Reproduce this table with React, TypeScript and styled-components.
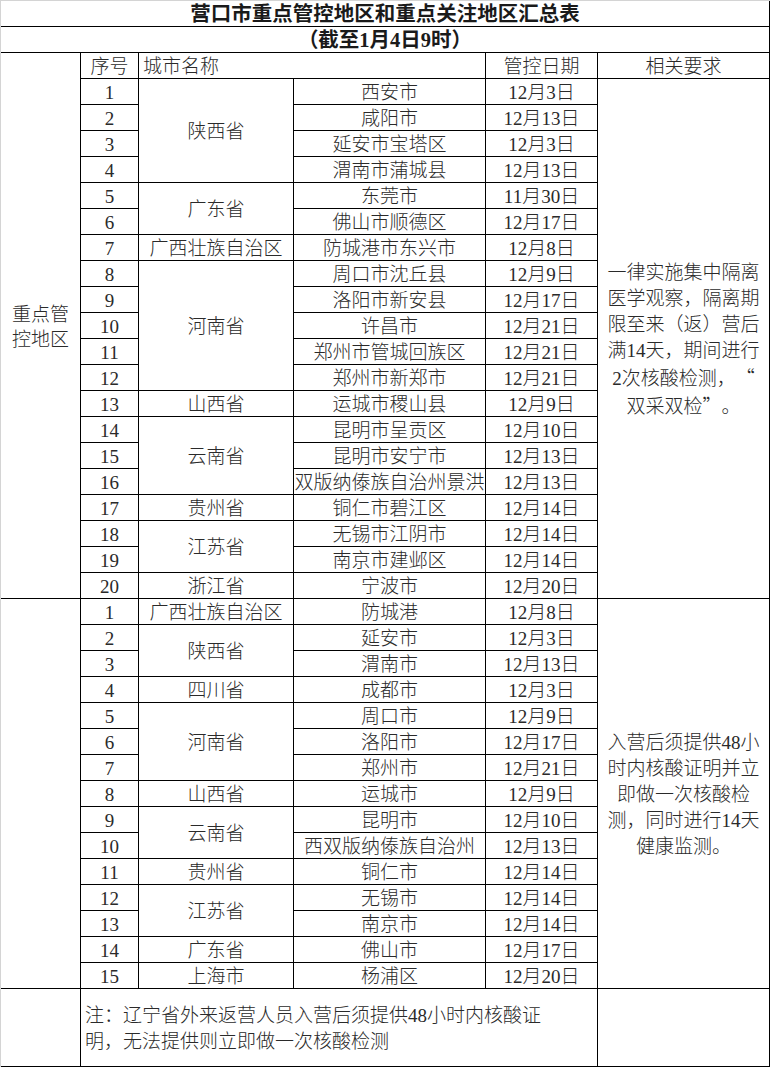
import React from "react"
import styled, { createGlobalStyle } from "styled-components"

type Entry = [string, string]
type Group = { province: string; entries: Entry[] }

const section1: Group[] = [
  {
    province: "陕西省",
    entries: [
      ["西安市", "12月3日"],
      ["咸阳市", "12月13日"],
      ["延安市宝塔区", "12月3日"],
      ["渭南市蒲城县", "12月13日"],
    ],
  },
  {
    province: "广东省",
    entries: [
      ["东莞市", "11月30日"],
      ["佛山市顺德区", "12月17日"],
    ],
  },
  { province: "广西壮族自治区", entries: [["防城港市东兴市", "12月8日"]] },
  {
    province: "河南省",
    entries: [
      ["周口市沈丘县", "12月9日"],
      ["洛阳市新安县", "12月17日"],
      ["许昌市", "12月21日"],
      ["郑州市管城回族区", "12月21日"],
      ["郑州市新郑市", "12月21日"],
    ],
  },
  { province: "山西省", entries: [["运城市稷山县", "12月9日"]] },
  {
    province: "云南省",
    entries: [
      ["昆明市呈贡区", "12月10日"],
      ["昆明市安宁市", "12月13日"],
      ["西双版纳傣族自治州景洪市", "12月13日"],
    ],
  },
  { province: "贵州省", entries: [["铜仁市碧江区", "12月14日"]] },
  {
    province: "江苏省",
    entries: [
      ["无锡市江阴市", "12月14日"],
      ["南京市建邺区", "12月14日"],
    ],
  },
  { province: "浙江省", entries: [["宁波市", "12月20日"]] },
]

const section2: Group[] = [
  { province: "广西壮族自治区", entries: [["防城港", "12月8日"]] },
  {
    province: "陕西省",
    entries: [
      ["延安市", "12月3日"],
      ["渭南市", "12月13日"],
    ],
  },
  { province: "四川省", entries: [["成都市", "12月3日"]] },
  {
    province: "河南省",
    entries: [
      ["周口市", "12月9日"],
      ["洛阳市", "12月17日"],
      ["郑州市", "12月21日"],
    ],
  },
  { province: "山西省", entries: [["运城市", "12月9日"]] },
  {
    province: "云南省",
    entries: [
      ["昆明市", "12月10日"],
      ["西双版纳傣族自治州", "12月13日"],
    ],
  },
  { province: "贵州省", entries: [["铜仁市", "12月14日"]] },
  {
    province: "江苏省",
    entries: [
      ["无锡市", "12月14日"],
      ["南京市", "12月14日"],
    ],
  },
  { province: "广东省", entries: [["佛山市", "12月17日"]] },
  { province: "上海市", entries: [["杨浦区", "12月20日"]] },
]

const rule2 = ["入营后须提供48小", "时内核酸证明并立", "即做一次核酸检", "测，同时进行14天", "健康监测。"]

const countRows = (groups: Group[]) => groups.reduce((n, g) => n + g.entries.length, 0)

// grid rows: 1 title, 2 subtitle, 3 header, then data rows, last footer
const FIRST_DATA_ROW = 4

const renderSection = (groups: Group[], startRow: number) => {
  const cells: React.ReactNode[] = []
  let row = startRow
  groups.forEach((group, gi) => {
    cells.push(
      <Cell key={`p-${startRow}-${gi}`} $col={3} $row={row} $rowSpan={group.entries.length}>
        {group.province}
      </Cell>
    )
    group.entries.forEach(([city, date]) => {
      const index = row - startRow + 1
      cells.push(
        <Cell key={`n-${row}`} $col={2} $row={row}>
          {index}
        </Cell>,
        <Cell key={`c-${row}`} $col={4} $row={row}>
          {city}
        </Cell>,
        <Cell key={`d-${row}`} $col={5} $row={row}>
          {date}
        </Cell>
      )
      row++
    })
  })
  return cells
}

export default function App() {
  const rows1 = countRows(section1)
  const rows2 = countRows(section2)
  const start2 = FIRST_DATA_ROW + rows1
  const footerRow = start2 + rows2

  return (
    <>
      <GlobalStyle />
      <Sheet>
        {/* Title */}
        <TitleCell $col={1} $colSpan={6} $row={1}>
          营口市重点管控地区和重点关注地区汇总表
        </TitleCell>
        <TitleCell $col={1} $colSpan={6} $row={2}>
          （截至1月4日9时）
        </TitleCell>

        {/* Header */}
        <Cell $col={1} $row={3} $rowSpan={rows1 + 1}>
          <Lines $lineHeight={25}>
            <div>重点管</div>
            <div>控地区</div>
          </Lines>
        </Cell>
        <Cell $col={2} $row={3}>序号</Cell>
        <Cell $col={3} $colSpan={2} $row={3} $align="left">
          城市名称
        </Cell>
        <Cell $col={5} $row={3}>管控日期</Cell>
        <Cell $col={6} $row={3}>相关要求</Cell>

        {/* Section 1 */}
        {renderSection(section1, FIRST_DATA_ROW)}
        <Cell $col={6} $row={FIRST_DATA_ROW} $rowSpan={rows1}>
          <Lines>
            <div>一律实施集中隔离</div>
            <div>医学观察，隔离期</div>
            <div>限至来（返）营后</div>
            <div>满14天，期间进行</div>
            <div>
              2次核酸检测，<Quote $side="right">“</Quote>
            </div>
            <div>
              双采双检<Quote $side="left">”</Quote>。
            </div>
          </Lines>
        </Cell>

        {/* Section 2 */}
        <Cell $col={1} $row={start2} $rowSpan={rows2} />
        {renderSection(section2, start2)}
        <Cell $col={6} $row={start2} $rowSpan={rows2}>
          <Lines>
            {rule2.map((line) => (
              <div key={line}>{line}</div>
            ))}
          </Lines>
        </Cell>

        {/* Footer */}
        <Cell $col={1} $row={footerRow} />
        <Cell $col={2} $colSpan={4} $row={footerRow} $align="left">
          <Lines $align="left">
            <div>注：辽宁省外来返营人员入营后须提供48小时内核酸证</div>
            <div>明，无法提供则立即做一次核酸检测</div>
          </Lines>
        </Cell>
        <Cell $col={6} $row={footerRow} />
      </Sheet>
    </>
  )
}

/**
 * Styled components
 */

const GlobalStyle = createGlobalStyle`
  html, body {
    margin: 0;
    padding: 0;
    background: #ffffff;
  }
`

const Sheet = styled("div")`
  display: grid;
  grid-template-columns: 80px 58px 155px 192px 112px 172px;
  grid-template-rows: repeat(38, 26px) 78px;
  width: 770px;
  box-sizing: border-box;
  border-left: 1px solid #d4d4d4;
  border-top: 1px solid #d4d4d4;
  font-family: "Liberation Serif", "Noto Sans CJK SC", serif;
  font-size: 19px;
  font-weight: 300;
  color: #2a2a2a;
`

const Cell = styled("div")<{
  $col: number
  $row: number
  $colSpan?: number
  $rowSpan?: number
  $align?: "left" | "center"
}>`
  grid-column: ${(p) => p.$col} / span ${(p) => p.$colSpan ?? 1};
  grid-row: ${(p) => p.$row} / span ${(p) => p.$rowSpan ?? 1};
  display: flex;
  align-items: center;
  justify-content: ${(p) => (p.$align === "left" ? "flex-start" : "center")};
  padding: 2px ${(p) => (p.$align === "left" ? "4px" : "0")} 0;
  min-width: 0;
  box-sizing: border-box;
  border-right: 1px solid #000;
  border-bottom: 1px solid #000;
  overflow: hidden;
  white-space: nowrap;
  line-height: 23px;
`

const TitleCell = styled(Cell)`
  font-weight: 700;
  font-size: 20.5px;
  color: #1a1a1a;
  padding-top: 1px;
`

const Lines = styled("div")<{ $align?: "left" | "center"; $lineHeight?: number }>`
  display: flex;
  flex-direction: column;
  align-items: ${(p) => (p.$align === "left" ? "flex-start" : "center")};
  line-height: ${(p) => p.$lineHeight ?? 26}px;
`

// full-width quote box, as the sheet's Song font draws it
const Quote = styled("span")<{ $side: "left" | "right" }>`
  display: inline-block;
  width: 1em;
  text-align: ${(p) => p.$side};
  font-family: "Noto Sans CJK SC", sans-serif;
`
